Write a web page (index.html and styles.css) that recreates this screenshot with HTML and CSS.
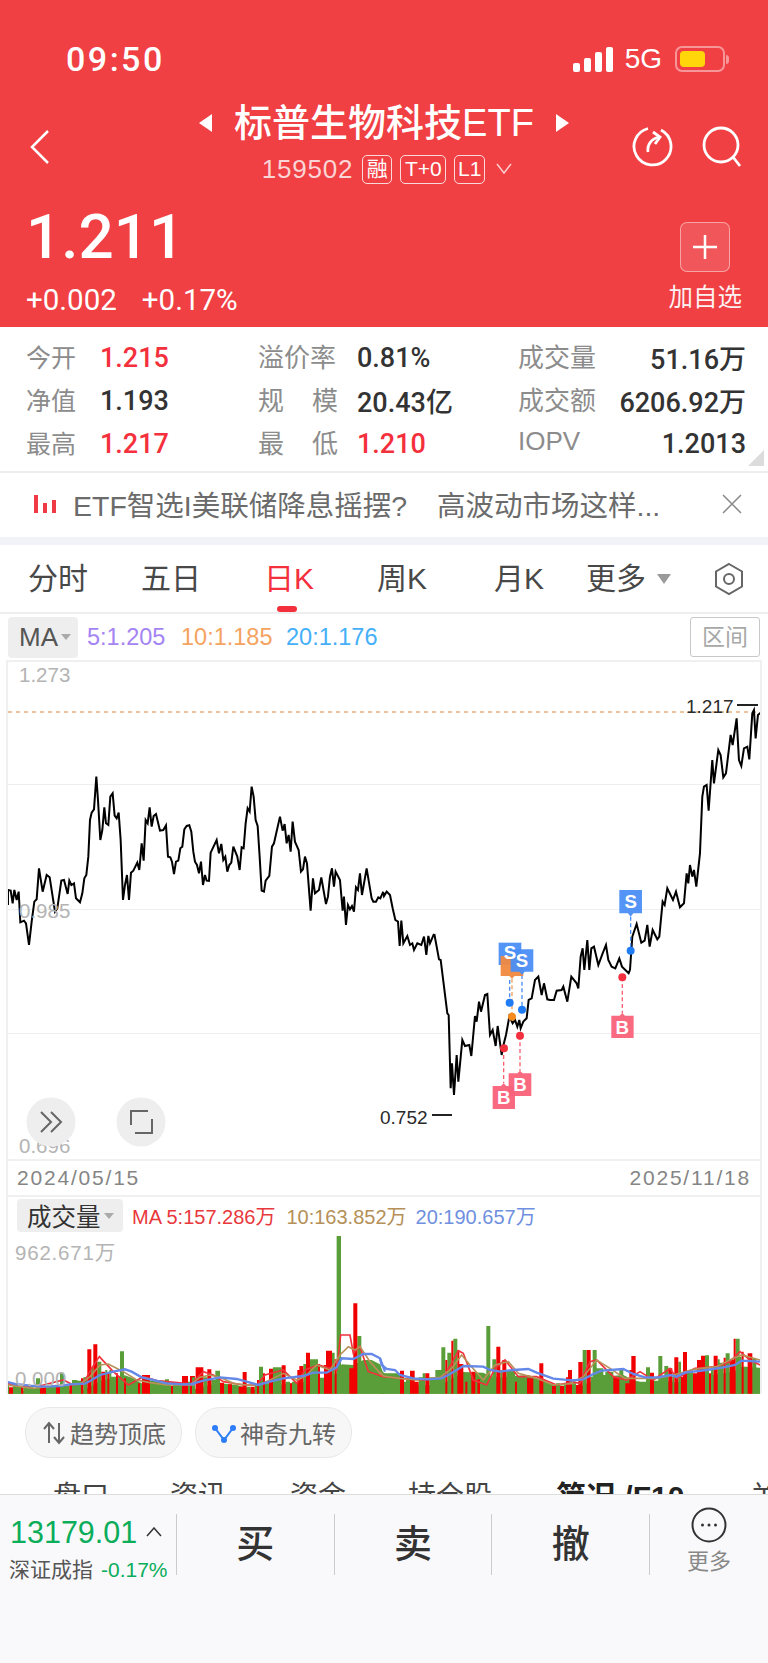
FILE: index.html
```html
<!DOCTYPE html>
<html lang="zh-CN">
<head>
    <meta charset="UTF-8">
    <meta name="viewport" content="width=device-width, initial-scale=1.0">
    <title>标普生物科技ETF</title>
    <link rel="stylesheet" href="styles.css">
</head>
<body>
    <div class="header">
        <div class="status">
            <span class="time">09:50</span>
            <div class="status-right">
                <div class="signal"><i class="s1"></i><i class="s2"></i><i class="s3"></i><i class="s4"></i></div>
                <span class="net">5G</span>
                <div class="battery"><div class="battery-fill"></div></div>
                <div class="battery-cap"></div>
            </div>
        </div>
        <div class="nav">
            <svg class="back" width="22" height="34" viewBox="0 0 22 34"><path d="M19 1 3 17l16 16" /></svg>
            <div class="nav-center">
                <div class="title-row">
                    <i class="arrow-left"></i>
                    <span class="title">标普生物科技ETF</span>
                    <i class="arrow-right"></i>
                </div>
                <div class="code-row">
                    <span class="code">159502</span>
                    <span class="tag tag-rong">融</span>
                    <span class="tag tag-t0">T+0</span>
                    <span class="tag tag-l1">L1</span>
                    <svg class="code-caret" width="16" height="12" viewBox="0 0 16 12"><path d="M1 1l7 9 7-9" /></svg>
                </div>
            </div>
            <div class="nav-icons">
                <svg width="44" height="44" viewBox="0 0 44 44"><path d="M30 6A18.500 18.500 0 1 1 17 4.500" /><path d="M17 28c-1-7 3-13 11-15" /><path d="M22 8l7 5-5 7" /></svg>
                <svg width="46" height="46" viewBox="0 0 46 46"><circle cx="22" cy="21" r="17" /><path d="M34 33l7 9" /></svg>
            </div>
        </div>
        <div class="quote">
            <div>
                <div class="price">1.211</div>
                <div class="change"><span>+0.002</span><span>+0.17%</span></div>
            </div>
            <div class="watch">
                <div class="watch-btn"><svg width="26" height="26" viewBox="0 0 26 26"><path d="M13 1v24M1 13h24" /></svg></div>
                <div class="watch-label">加自选</div>
            </div>
        </div>
    </div>

    <div class="stats">
        <span class="lbl">今开</span><span class="val red">1.215</span>
        <span class="lbl wide">溢价率</span><span class="val">0.81%</span>
        <span class="lbl wide">成交量</span><span class="val end">51.16万</span>
        <span class="lbl">净值</span><span class="val">1.193</span>
        <span class="lbl wide spread"><b>规</b><b>模</b></span><span class="val">20.43亿</span>
        <span class="lbl wide">成交额</span><span class="val end">6206.92万</span>
        <span class="lbl">最高</span><span class="val red">1.217</span>
        <span class="lbl wide spread"><b>最</b><b>低</b></span><span class="val red">1.210</span>
        <span class="lbl wide">IOPV</span><span class="val end">1.2013</span>
        <i class="corner"></i>
    </div>

    <div class="news">
        <div class="news-icon"><i class="n1"></i><i class="n2"></i><i class="n3"></i></div>
        <span class="news-a">ETF智选I美联储降息摇摆?</span>
        <span class="news-b">高波动市场这样...</span>
        <svg class="news-close" width="20" height="20" viewBox="0 0 20 20"><path d="M1 1l18 18M19 1 1 19" /></svg>
    </div>

    <div class="tabs">
        <div class="tab">分时</div>
        <div class="tab">五日</div>
        <div class="tab active">日K</div>
        <div class="tab">周K</div>
        <div class="tab">月K</div>
        <div class="tab more">更多<i class="tri"></i></div>
        <svg class="hex" width="32" height="34" viewBox="0 0 32 34"><path d="M16 2l13 7.500v15L16 32 3 24.500v-15z" /><circle cx="16" cy="17" r="5" /></svg>
    </div>

    <div class="ma-row">
        <div class="ma-btn">MA<i class="tri-small"></i></div>
        <span class="ma5">5:1.205</span>
        <span class="ma10">10:1.185</span>
        <span class="ma20">20:1.176</span>
        <div class="range-btn">区间</div>
    </div>

    <div class="frame">
        <svg class="kline" width="752" height="497" viewBox="8 662 752 497">
            <path class="grid-line" d="M8 784.500H760M8 909.500H760M8 1033.500H760" />
            <path class="last-line" d="M8 712H760" />
            <g transform="translate(0,670) scale(.3333)">
                <polyline class="price-line" points="24,705 24,660 32,662 38,700 43,660 50,690 56,665 61,757 72,752 78,760 87,825 95,755 103,695 110,688 117,595 128,665 140,615 149,622 165,725 172,715 184,632 192,630 203,672 208,632 214,645 222,640 228,685 240,697 247,670 253,625 259,615 265,560 270,450 275,428 282,418 289,320 294,390 301,510 307,480 313,412 318,460 325,465 331,380 338,370 344,437 350,445 356,428 362,510 369,690 375,645 381,615 387,690 393,608 400,602 412,578 418,600 425,520 431,572 437,450 443,460 449,412 455,470 461,438 468,432 480,482 490,480 498,466 504,560 511,562 516,575 522,612 528,575 535,572 541,535 547,530 553,478 560,468 568,466 574,485 580,545 585,575 591,585 597,610 603,575 609,645 615,615 620,632 627,633 632,548 650,510 657,550 664,522 670,570 676,560 682,605 688,585 694,578 700,530 712,560 719,600 725,532 731,535 737,460 743,415 749,425 755,350 761,380 767,450 773,468 779,560 785,662 792,665 797,632 808,618 816,530 822,520 840,440 848,482 854,462 860,520 866,495 872,545 878,455 885,515 896,540 903,605 909,598 915,560 921,580 932,722 939,625 945,670 957,660 964,622 978,702 984,680 990,620 996,595 1002,650 1007,605 1020,630 1028,722 1032,680 1038,765 1044,705 1050,718 1056,708 1062,725 1068,652 1074,660 1080,610 1086,675 1100,595 1115,685 1120,695 1128,695 1135,682 1141,685 1150,665" />
            </g>
            <g transform="translate(384,670) scale(.3333)">
                <polyline class="price-line" points="-2,668 0,678 8,665 18,675 26,715 34,750 42,755 47,828 52,752 58,820 70,798 78,825 85,820 90,840 100,820 112,825 120,800 127,855 133,798 138,820 150,792" />
                <polyline class="price-line" points="738,900 745,800 758,762 772,818 782,812 790,765 797,830 806,780 820,808 826,800 836,695 842,705 850,655 867,690 876,665 888,712 900,700 908,610 913,640 918,585 925,620 930,600 937,650 948,550 955,380 960,350 968,345 974,422 985,270 990,340 1003,240 1010,255 1018,322 1026,310 1040,195 1046,225 1058,145 1065,270 1072,288 1080,235 1090,230 1096,268 1105,130 1110,120 1115,205 1122,135 1130,128" />
            </g>
            <g transform="translate(430,920) scale(.3333)">
                <polyline class="price-line" points="13,42 27,118 32,120 52,280 56,285 62,505 66,430 72,525 80,405 85,485 97,360 105,378 118,375 124,408 135,288 140,305 147,245 153,275 165,225 172,222 180,345 188,330 197,378 203,318 215,405 218,385 228,345 238,290 248,310 255,300 262,320 268,300 272,325 280,305 290,295 296,240 305,235 315,180 325,170 335,225 342,190 352,238 360,240 372,240 380,212 395,210 400,200 412,245 424,170 440,190 445,205 452,110 458,85 463,150 472,60 478,150 484,85 492,80 505,135 518,100 528,75 535,120 545,140 556,145 568,115 576,140 596,160 600,150" />
                <path class="dash-red" d="M221 385V490M270 347V452M577 172V280" />
                <path class="dash-blue" d="M239 180V248M276 165V268M602 -10V92" />
                <path class="dash-orange" d="M246 176V290" />
                <path class="badge-b" d="M188 498H213L221 490 229 498H255V567H188Z" />
                <path class="badge-b" d="M236 460H262L270 452 278 460H304V528H236Z" />
                <path class="badge-b" d="M544 287H569L577 279 585 287H611V354H544Z" />
                <path class="badge-s" d="M206 68H274V135H206Z" />
                <path class="badge-o" d="M212 108H280V168H254L246 176 238 168H212Z" />
                <path class="badge-s" d="M242 88H310V155H284L276 165 268 155H242Z" />
                <path class="badge-s" d="M568 -90H636V-20H610L602 -10 594 -20H568Z" />
                <text class="badge-text" x="240" y="116">S</text>
                <text class="badge-text" x="276" y="141">S</text>
                <text class="badge-text" x="602" y="-35">S</text>
                <text class="badge-text" x="221" y="553">B</text>
                <text class="badge-text" x="270" y="514">B</text>
                <text class="badge-text" x="577" y="341">B</text>
                <circle class="dot-red" cx="222" cy="385" r="12" />
                <circle class="dot-red" cx="270" cy="347" r="12" />
                <circle class="dot-red" cx="577" cy="172" r="12" />
                <circle class="dot-blue" cx="239" cy="248" r="12" />
                <circle class="dot-blue" cx="276" cy="269" r="12" />
                <circle class="dot-blue" cx="602" cy="92" r="12" />
                <circle class="dot-orange" cx="246" cy="290" r="12" />
            </g>
            <text class="axis" x="19" y="682">1.273</text>
            <text class="axis" x="19" y="918">0.985</text>
            <text class="axis" x="19" y="1153">0.696</text>
            <text class="mark" x="686" y="713">1.217</text>
            <path class="mark-dash" d="M737 705H758" />
            <text class="mark" x="380" y="1124">0.752</text>
            <path class="mark-dash" d="M432 1115H452" />
            <circle class="round-btn" cx="51" cy="1122" r="24.500" />
            <circle class="round-btn" cx="141" cy="1122" r="24.500" />
            <path class="round-icon" d="M41 1112l10 10-10 10M51 1112l10 10-10 10" />
            <path class="round-icon" d="M131 1125v-14h17M152 1119v14h-17" />
        </svg>
        <div class="dates"><span>2024/05/15</span><span>2025/11/18</span></div>
        <div class="vol-head">
            <div class="vol-btn">成交量<i class="tri-small"></i></div>
            <span class="vol-ma5">MA 5:157.286万</span>
            <span class="vol-ma10">10:163.852万</span>
            <span class="vol-ma20">20:190.657万</span>
        </div>
        <svg class="vol" width="752" height="160" viewBox="8 1234 752 160">
            <text class="axis vol-axis" x="15" y="1260">962.671万</text>
            <g transform="translate(0,1290) scale(.3333)">
                <polygon class="bar-g" points="19,293 45,300 90,305 130,308 180,306 210,301 255,299 275,288 300,273 340,263 375,256 395,263 425,280 460,288 500,298 550,301 585,300 585,311 19,311" />
                <path class="bar-g" d="M19 311V282H27V311ZM39 311V285H63V311ZM70 311V288H100V311ZM100 311V295H108V311ZM108 311V265H120V311ZM138 311V290H168V311ZM180 311V248H192V311ZM192 311V288H208V311ZM216 311V270H232V311ZM232 311V272H243V311ZM250 311V262H262V311ZM274 311V232H280V311ZM292 311V215H304V311ZM316 311V240H322V311ZM328 311V240H334V311ZM334 311V260H348V311ZM354 311V262H360V311ZM360 311V184H372V311ZM378 311V270H390V311ZM390 311V288H414V311ZM420 311V285H426V311ZM450 311V272H495V311ZM495 311V268H507V311ZM507 311V285H513V311ZM519 311V280H546V311ZM564 311V275H570V311Z" />
                <path class="bar-r" d="M27 311V292H39V311ZM63 311V290H70V311ZM120 311V290H138V311ZM168 311V290H180V311ZM208 311V285H216V311ZM243 311V265H250V311ZM262 311V178H274V311ZM280 311V163H292V311ZM304 311V245H316V311ZM322 311V250H328V311ZM348 311V250H354V311ZM372 311V265H378V311ZM414 311V280H420V311ZM426 311V255H450V311ZM513 311V288H519V311ZM546 311V258H564V311ZM570 311V258H585V311Z" />
            </g>
            <g transform="translate(190,1290) scale(.3333)">
                <polygon class="bar-g" points="0,301 40,290 90,280 140,285 170,293 205,303 240,293 280,283 340,276 370,266 410,266 440,250 455,223 490,225 520,210 545,210 570,223 585,263 585,311 0,311" />
                <path class="bar-g" d="M0 311V278H6V311ZM6 311V262H16V311ZM40 311V262H52V311ZM64 311V270H76V311ZM76 311V242H90V311ZM102 311V300H114V311ZM126 311V287H146V311ZM170 311V290H182V311ZM194 311V285H201V311ZM207 311V230H219V311ZM225 311V280H237V311ZM249 311V232H275V311ZM287 311V275H300V311ZM306 311V275H322V311ZM340 311V222H348V311ZM360 311V208H384V311ZM390 311V263H402V311ZM426 311V188H434V311ZM440 311V-162H453V311ZM453 311V232H478V311ZM502 311V138H514V311ZM514 311V218H520V311ZM520 311V215H532V311ZM532 311V255H585V311Z" />
                <path class="bar-r" d="M0 311V258H6V311ZM17 311V232H40V311ZM52 311V238H64V311ZM90 311V278H102V311ZM114 311V283H126V311ZM146 311V290H158V311ZM158 311V246H170V311ZM182 311V290H194V311ZM201 311V270H207V311ZM219 311V250H225V311ZM237 311V236H249V311ZM275 311V226H287V311ZM300 311V280H306V311ZM322 311V240H328V311ZM328 311V228H340V311ZM348 311V188H360V311ZM384 311V222H390V311ZM402 311V225H408V311ZM408 311V182H426V311ZM434 311V208H440V311ZM478 311V235H490V311ZM490 311V40H502V311ZM574 311V255H580V311Z" />
            </g>
            <g transform="translate(380,1290) scale(.3333)">
                <polygon class="bar-g" points="0,223 5,243 20,255 45,258 60,273 100,283 140,286 185,283 210,270 250,246 310,248 330,258 360,263 400,258 445,255 470,266 520,284 585,290 585,311 0,311" />
                <path class="bar-g" d="M0 311V250H60V311ZM72 311V275H78V311ZM78 311V270H90V311ZM116 311V262H128V311ZM128 311V250H136V311ZM148 311V262H166V311ZM166 311V240H184V311ZM184 311V172H196V311ZM202 311V188H214V311ZM220 311V146H232V311ZM250 311V252H256V311ZM262 311V268H274V311ZM286 311V270H292V311ZM300 311V268H312V311ZM312 311V278H319V311ZM319 311V108H331V311ZM331 311V260H337V311ZM337 311V208H349V311ZM361 311V240H367V311ZM379 311V240H405V311ZM411 311V265H441V311ZM460 311V270H478V311ZM490 311V270H496V311ZM496 311V285H516V311ZM528 311V280H540V311ZM552 311V285H558V311ZM570 311V280H585V311Z" />
                <path class="bar-r" d="M60 311V242H72V311ZM90 311V242H104V311ZM104 311V275H116V311ZM136 311V250H148V311ZM196 311V210H202V311ZM214 311V152H220V311ZM232 311V180H238V311ZM238 311V222H250V311ZM256 311V275H262V311ZM274 311V245H286V311ZM292 311V268H300V311ZM349 311V170H361V311ZM367 311V210H379V311ZM405 311V275H411V311ZM441 311V265H460V311ZM478 311V220H490V311ZM516 311V288H528V311ZM540 311V288H552V311ZM558 311V262H564V311ZM564 311V240H570V311Z" />
            </g>
            <g transform="translate(570,1290) scale(.3333)">
                <polygon class="bar-g" points="0,290 40,286 70,270 95,260 160,255 190,270 225,280 265,280 300,273 320,278 345,266 410,258 460,250 495,243 515,230 570,233 571,311 0,311" />
                <path class="bar-g" d="M0 311V280H18V311ZM38 311V180H50V311ZM62 311V260H68V311ZM68 311V180H80V311ZM80 311V235H100V311ZM100 311V255H106V311ZM106 311V245H130V311ZM148 311V240H160V311ZM160 311V295H166V311ZM198 311V275H228V311ZM228 311V232H240V311ZM252 311V272H265V311ZM265 311V198H277V311ZM277 311V258H283V311ZM283 311V228H295V311ZM307 311V260H313V311ZM325 311V215H333V311ZM351 311V245H369V311ZM405 311V196H417V311ZM423 311V240H431V311ZM443 311V208H449V311ZM449 311V218H461V311ZM467 311V190H479V311ZM497 311V146H509V311ZM509 311V200H515V311ZM521 311V230H533V311ZM547 311V205H559V311ZM559 311V280H571V311Z" />
                <path class="bar-r" d="M0 311V240H6V311ZM18 311V285H25V311ZM25 311V216H38V311ZM50 311V180H62V311ZM130 311V262H148V311ZM166 311V280H178V311ZM178 311V240H184V311ZM184 311V198H197V311ZM240 311V248H252V311ZM295 311V235H307V311ZM313 311V202H325V311ZM333 311V260H339V311ZM339 311V186H351V311ZM369 311V250H381V311ZM381 311V210H393V311ZM393 311V197H405V311ZM417 311V250H423V311ZM431 311V197H443V311ZM461 311V203H467V311ZM479 311V210H491V311ZM491 311V146H497V311ZM515 311V185H521V311ZM533 311V190H547V311Z" />
            </g>
            <g transform="translate(0,1290) scale(.3333)">
                <polyline class="line-red" points="19,280 70,290 130,285 190,270 220,285 250,280 275,235 298,200 340,245 385,285 430,260 470,272 585,283" />
                <polyline class="line-tan" points="19,285 60,290 100,295 140,290 180,285 240,282 270,260 300,225 325,222 370,245 410,270 450,278 500,285 585,285" />
                <polyline class="line-blue" points="19,275 45,282 90,287 130,290 180,288 210,283 255,281 275,270 300,255 340,245 375,238 395,245 425,262 460,270 500,280 550,283 585,282" />
            </g>
            <g transform="translate(190,1290) scale(.3333)">
                <polyline class="line-red" points="0,285 40,245 70,255 100,275 160,285 200,285 225,255 280,240 320,280 345,240 385,225 440,240 452,135 480,135 490,190 510,170 535,245 585,262" />
                <polyline class="line-tan" points="0,285 30,262 60,255 90,262 130,280 170,285 205,285 240,270 280,250 320,270 345,260 380,225 420,240 450,195 475,170 495,180 510,170 540,215 575,255 585,260" />
                <polyline class="line-blue" points="0,283 40,272 90,262 140,267 170,275 205,285 240,275 280,265 340,258 370,248 410,248 440,232 455,205 490,207 520,192 545,192 570,205 585,245" />
            </g>
            <g transform="translate(380,1290) scale(.3333)">
                <polyline class="line-red" points="0,258 60,265 130,270 190,262 215,220 235,182 250,190 280,270 320,285 345,235 375,210 415,260 470,260 530,285 585,275" />
                <polyline class="line-tan" points="0,245 10,258 60,265 110,270 180,262 215,235 245,195 270,225 310,270 345,225 385,215 415,250 470,265 520,285 585,280" />
                <polyline class="line-blue" points="0,205 5,225 20,237 45,240 60,255 100,265 140,268 185,265 210,252 250,228 310,230 330,240 360,245 400,240 445,237 470,248 520,266 585,272" />
            </g>
            <g transform="translate(570,1290) scale(.3333)">
                <polyline class="line-red" points="0,275 30,280 60,215 80,210 130,260 170,270 210,245 250,270 300,235 320,265 375,235 440,230 480,215 510,185 540,210 570,225" />
                <polyline class="line-tan" points="0,280 40,260 80,210 120,235 165,265 215,265 260,265 310,255 370,238 440,230 490,205 515,195 570,210" />
                <polyline class="line-blue" points="0,272 40,268 70,252 95,242 160,237 190,252 225,262 265,262 300,255 320,260 345,248 410,240 460,232 495,225 515,212 570,215" />
            </g>
            <text class="axis" x="15" y="1386">0.000</text>
        </svg>
    </div>

    <div class="chips">
        <div class="chip">
            <svg width="24" height="24" viewBox="0 0 24 24"><path class="chip-arrows" d="M7 22V3M2 8l5-6 5 6M17 2v19M12 16l5 6 5-6" /></svg>
            趋势顶底
        </div>
        <div class="chip">
            <svg width="24" height="24" viewBox="0 0 24 24"><path class="chip-v" d="M3 7l9 12 9-12" /><circle class="chip-dot" cx="3" cy="7" r="3" /><circle class="chip-dot" cx="21" cy="7" r="3" /><circle class="chip-dot" cx="12" cy="19" r="3" /></svg>
            神奇九转
        </div>
    </div>

    <div class="subtabs">
        <span>盘口</span><span>资讯</span><span>资金</span><span>持仓股</span><span class="sub-on">简况 /F10</span><span>关</span>
    </div>

    <div class="footer">
        <div class="index">
            <div class="index-top"><span class="index-num">13179.01</span><svg width="16" height="10" viewBox="0 0 16 10"><path d="M1 9l7-8 7 8" /></svg></div>
            <div class="index-bottom"><span>深证成指</span><span class="index-pct">-0.17%</span></div>
        </div>
        <div class="action">买</div>
        <div class="action">卖</div>
        <div class="action">撤</div>
        <div class="more-cell">
            <svg width="36" height="36" viewBox="0 0 36 36"><circle class="more-ring" cx="18" cy="18" r="16.500" /><circle cx="11.500" cy="18" r="1.500" /><circle cx="18" cy="18" r="1.500" /><circle cx="24.500" cy="18" r="1.500" /></svg>
            <span>更多</span>
        </div>
    </div>
</body>
</html>
```

FILE: styles.css
```css
* {
    box-sizing: border-box;
}
body {
    margin: 0;
    width: 768px;
    height: 1663px;
    overflow: hidden;
    background: #ffffff;
    font-family: "Liberation Sans", "Noto Sans CJK SC", sans-serif;
    color: #2a2a2a;
}
i {
    display: block;
}

/* red header */
.header {
    height: 327px;
    background: #f04044;
    color: #ffffff;
}
.status {
    display: flex;
    justify-content: space-between;
    align-items: center;
    height: 101px;
    padding: 43px 39px 26px 66px;
}
.time {
    font-family: Roboto, sans-serif;
    font-size: 34px;
    font-weight: 500;
    letter-spacing: 2.500px;
}
.status-right {
    display: flex;
    align-items: center;
}
.signal {
    display: flex;
    align-items: flex-end;
    gap: 4px;
    height: 25px;
    margin-right: 12px;
}
.signal i {
    width: 7px;
    background: #ffffff;
    border-radius: 2px;
}
.s1 { height: 9px; }
.s2 { height: 14px; }
.s3 { height: 20px; }
.s4 { height: 25px; }
.net {
    font-size: 28px;
    margin-right: 13px;
}
.battery {
    width: 50px;
    height: 26px;
    padding: 3px;
    border: 2px solid rgba(255, 255, 255, 0.45);
    border-radius: 7px;
}
.battery-fill {
    width: 25px;
    height: 100%;
    background: #ffd60a;
    border-radius: 4px;
}
.battery-cap {
    width: 3px;
    height: 9px;
    margin-left: 1px;
    background: rgba(255, 255, 255, 0.45);
    border-radius: 0 3px 3px 0;
}
.nav {
    display: grid;
    grid-template-columns: 1fr auto 1fr;
    align-items: center;
    height: 92px;
}
.back {
    margin-left: 29px;
}
.back path, .code-caret path {
    fill: none;
    stroke: #ffffff;
    stroke-width: 2.500;
}
.code-caret path {
    stroke-width: 1.500;
    opacity: 0.75;
}
.nav-center {
    display: flex;
    flex-direction: column;
    align-items: center;
}
.title-row {
    display: flex;
    align-items: center;
    height: 44px;
}
.title {
    font-size: 38px;
    font-weight: 500;
    line-height: 44px;
    margin: 0 22px;
}
.arrow-left {
    border: 9px solid transparent;
    border-left: 0;
    border-right: 13px solid #ffffff;
}
.arrow-right {
    border: 9px solid transparent;
    border-right: 0;
    border-left: 13px solid #ffffff;
}
.code-row {
    display: flex;
    align-items: center;
    height: 48px;
    margin-left: 6px;
    color: rgba(255, 255, 255, 0.78);
}
.code {
    font-size: 26px;
    letter-spacing: 0.800px;
    margin-right: 9px;
}
.tag {
    height: 29px;
    line-height: 26px;
    border: 1px solid rgba(255, 255, 255, 0.8);
    border-radius: 5px;
    font-size: 21px;
    text-align: center;
    color: #ffffff;
}
.tag-rong { width: 30px; margin-right: 8px; }
.tag-t0 { width: 46px; margin-right: 8px; }
.tag-l1 { width: 31px; margin-right: 11px; }
.nav-icons {
    display: flex;
    justify-content: flex-end;
    gap: 24px;
    padding-right: 23px;
}
.nav-icons path, .nav-icons circle {
    fill: none;
    stroke: #ffffff;
    stroke-width: 2.800;
}
.quote {
    display: flex;
    justify-content: space-between;
    padding: 14px 26px 0 26px;
}
.price {
    font-family: Roboto, sans-serif;
    font-size: 62px;
    font-weight: 500;
    line-height: 60px;
}
.change {
    display: flex;
    gap: 25px;
    margin-top: 17px;
    font-family: Roboto, sans-serif;
    font-size: 29.500px;
    line-height: 32px;
}
.watch {
    display: flex;
    flex-direction: column;
    align-items: center;
}
.watch-btn {
    display: flex;
    align-items: center;
    justify-content: center;
    width: 50px;
    height: 50px;
    margin-top: 15px;
    background: rgba(255, 255, 255, 0.12);
    border: 1px solid rgba(255, 255, 255, 0.45);
    border-radius: 7px;
}
.watch-btn path {
    stroke: #ffffff;
    stroke-width: 2.500;
}
.watch-label {
    margin-top: 11px;
    font-size: 24.500px;
    line-height: 30px;
    opacity: 0.92;
}

/* quote table */
.stats {
    position: relative;
    display: grid;
    grid-template-columns: 74px 158px 99px 161px 79px 149px;
    grid-auto-rows: 43px;
    align-items: center;
    height: 146px;
    padding: 9px 0 0 26px;
    border-bottom: 2px solid #eeeeee;
}
.lbl {
    margin-top: -4px;
    font-size: 25px;
    color: #8c8c8c;
}
.lbl.wide {
    width: 80px;
    font-size: 26px;
}
.spread {
    display: flex;
    justify-content: space-between;
}
.spread b {
    font-weight: normal;
}
.val {
    font-family: Roboto, "Noto Sans CJK SC", sans-serif;
    font-size: 27px;
    font-weight: 500;
    color: #333333;
}
.val.end {
    text-align: right;
}
.val.red {
    color: #f5303d;
}
.corner {
    position: absolute;
    right: 4px;
    bottom: 5px;
    border-style: solid;
    border-width: 0 0 16px 16px;
    border-color: transparent transparent #dcdcdc transparent;
}

/* news strip */
.news {
    display: flex;
    align-items: center;
    height: 64px;
    padding: 0 0 3px 34px;
    font-size: 28.500px;
    color: #6b6b6b;
}
.news-icon {
    display: flex;
    align-items: flex-end;
    gap: 5px;
    height: 18px;
    margin-right: 17px;
}
.news-icon i {
    width: 4px;
    background: #f03a45;
}
.n1 { height: 18px; }
.n2 { height: 10px; }
.n3 { height: 13px; }
.news-a {
    width: 364px;
}
.news-b {
    width: 285px;
}
.news-close path {
    fill: none;
    stroke: #8a8a8a;
    stroke-width: 1.500;
}
.tabs {
    display: grid;
    grid-template-columns: 116px 110px 126px 100px 134px 86px 1fr;
    align-items: center;
    height: 77px;
    border-top: 8px solid #f2f3f8;
    border-bottom: 2px solid #eeeeee;
    font-size: 30px;
    color: #484848;
    text-align: center;
}
.tab {
    position: relative;
    line-height: 67px;
}
.tab.active {
    color: #f5303d;
}
.tab.active::after {
    content: "";
    position: absolute;
    left: 51px;
    bottom: 0;
    width: 20px;
    height: 6px;
    background: #f5303d;
    border-radius: 3px;
}
.more {
    display: flex;
    align-items: center;
}
.tri {
    margin-left: 11px;
    border-style: solid;
    border-width: 10px 7px 0 7px;
    border-color: #9a9a9a transparent transparent transparent;
}
.hex {
    justify-self: end;
    margin-right: 23px;
}
.hex path, .hex circle {
    fill: none;
    stroke: #666666;
    stroke-width: 2;
}

/* ma legend */
.ma-row {
    display: flex;
    align-items: center;
    height: 46px;
    padding-left: 8px;
    font-size: 23.500px;
}
.ma-btn {
    display: flex;
    align-items: center;
    width: 70px;
    height: 41px;
    padding-left: 11px;
    margin-right: 9px;
    background: #eeeeee;
    border-radius: 4px;
    font-size: 26px;
    color: #555555;
}
.tri-small {
    margin-left: 3px;
    border-style: solid;
    border-width: 6px 5px 0 5px;
    border-color: #aaaaaa transparent transparent transparent;
}
.ma5 { color: #a484f2; width: 94px; }
.ma10 { color: #f5a35f; width: 105px; }
.ma20 { color: #45aff8; }
.range-btn {
    width: 70px;
    height: 40px;
    margin-left: auto;
    margin-right: 8px;
    border: 1px solid #c8c8c8;
    border-radius: 3px;
    font-size: 23px;
    line-height: 38px;
    text-align: center;
    color: #a8a8a8;
}

/* chart frame */
.frame {
    width: 756px;
    margin-left: 6px;
    border-top: 2px solid #f0f0f0;
    border-left: 2px solid #f0f0f0;
    border-right: 2px solid #f0f0f0;
}
.frame svg {
    display: block;
}
.grid-line {
    stroke: #eeeeee;
    stroke-width: 1;
    fill: none;
}
.last-line {
    stroke: #e3b37e;
    stroke-width: 1.500;
    stroke-dasharray: 4 4;
    fill: none;
}
.price-line {
    fill: none;
    stroke: #000000;
    stroke-width: 6;
    stroke-linejoin: miter;
}
.axis {
    font-size: 20.500px;
    fill: #b4b4b4;
}
.vol-axis {
    letter-spacing: 0.800px;
}
.mark {
    font-size: 19px;
    fill: #2a2a2a;
}
.mark-dash {
    stroke: #222222;
    stroke-width: 2;
}
.round-btn {
    fill: #eeeeee;
}
.round-icon {
    fill: none;
    stroke: #666666;
    stroke-width: 2;
}
.dash-red, .dash-blue, .dash-orange {
    fill: none;
    stroke-width: 4;
    stroke-dasharray: 12 8;
}
.dash-red { stroke: #f96070; }
.dash-blue { stroke: #4a8ef5; }
.dash-orange { stroke: #f2a05a; }
.badge-b { fill: #f9627a; opacity: 0.95; }
.badge-s { fill: #4a8ef5; opacity: 0.95; }
.badge-o { fill: #f0893f; opacity: 0.95; }
.badge-text {
    font-size: 56px;
    font-weight: bold;
    fill: #ffffff;
    text-anchor: middle;
}
.dot-red { fill: #f4303f; }
.dot-blue { fill: #1f7cf5; }
.dot-orange { fill: #f58a1f; }
.dates {
    display: flex;
    justify-content: space-between;
    align-items: center;
    height: 38px;
    padding: 0 9px;
    border-top: 2px solid #f0f0f0;
    border-bottom: 2px solid #f0f0f0;
    font-size: 21px;
    letter-spacing: 1.800px;
    color: #858585;
}
.vol-head {
    display: flex;
    align-items: center;
    height: 37px;
    padding-left: 9px;
    font-size: 20px;
}
.vol-btn {
    display: flex;
    align-items: center;
    width: 106px;
    height: 33px;
    padding-left: 10px;
    margin-right: 9px;
    background: #eeeeee;
    border-radius: 4px;
    font-size: 24.500px;
    color: #333333;
}
.vol-ma5 { color: #e8383d; margin-right: 11px; }
.vol-ma10 { color: #b59058; margin-right: 9px; }
.vol-ma20 { color: #6f8fe0; }
.bar-g { fill: #5a9e39; }
.bar-r { fill: #f00000; }
.line-red, .line-tan, .line-blue {
    fill: none;
    stroke-width: 5;
}
.line-red { stroke: #f0323c; }
.line-tan { stroke: #b89058; }
.line-blue { stroke: #6488e8; stroke-width: 7; }

/* chips and sub tabs */
.chips {
    display: flex;
    gap: 13px;
    margin-top: 13px;
    padding-left: 25px;
}
.chip {
    display: flex;
    align-items: center;
    gap: 4px;
    width: 157px;
    height: 51px;
    padding-left: 16px;
    background: #f7f7f7;
    border: 1px solid #e8e8e8;
    border-radius: 25px;
    font-size: 24px;
    color: #666666;
}
.chip-arrows {
    fill: none;
    stroke: #666666;
    stroke-width: 2;
}
.chip-v {
    fill: none;
    stroke: #2c7cf6;
    stroke-width: 2;
}
.chip-dot {
    fill: #2c7cf6;
}
.subtabs {
    display: grid;
    grid-template-columns: 117px 120px 118px 148px 194px 1fr;
    height: 36px;
    padding: 19px 0 0 53px;
    overflow: hidden;
    font-size: 28px;
    line-height: 40px;
    color: #444444;
}
.sub-on {
    font-size: 30px;
    font-weight: bold;
    white-space: nowrap;
    color: #222222;
}

/* bottom bar */
.footer {
    display: flex;
    align-items: flex-start;
    height: 169px;
    padding-top: 19px;
    background: #f9f9fb;
    border-top: 1px solid #dddddd;
}
.index {
    width: 176px;
    height: 61px;
    padding-left: 10px;
}
.index-top {
    display: flex;
    align-items: center;
    gap: 9px;
    height: 36px;
}
.index-top svg path {
    fill: none;
    stroke: #333333;
    stroke-width: 1.500;
}
.index-num {
    font-size: 30.500px;
    color: #0aad5a;
}
.index-bottom {
    display: flex;
    gap: 8px;
    margin-top: 6px;
    margin-left: -1px;
    font-size: 21px;
    line-height: 28px;
    color: #555555;
    white-space: nowrap;
}
.index-pct {
    color: #0aad5a;
}
.action {
    width: 158px;
    height: 61px;
    border-left: 1px solid #cccccc;
    font-size: 38px;
    font-weight: 500;
    line-height: 61px;
    text-align: center;
    color: #333333;
}
.more-cell {
    display: flex;
    flex-direction: column;
    align-items: center;
    width: 119px;
    height: 61px;
    border-left: 1px solid #cccccc;
    font-size: 22px;
    line-height: 26px;
    color: #888888;
}
.more-cell svg {
    margin-top: -7px;
    margin-bottom: 6px;
}
.more-cell circle {
    fill: #333333;
}
.more-cell .more-ring {
    fill: none;
    stroke: #333333;
    stroke-width: 2;
}
```
